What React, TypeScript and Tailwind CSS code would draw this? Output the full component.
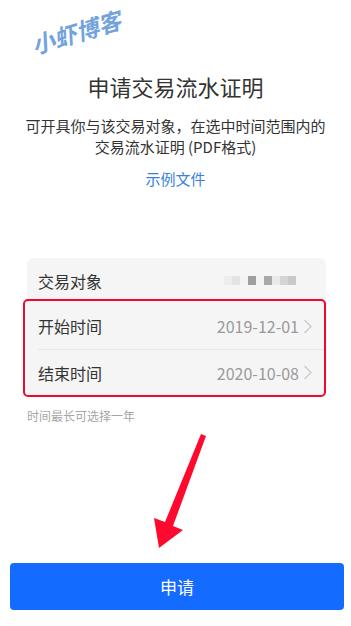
import React from "react";

const font = {
  fontFamily: '"Noto Sans CJK SC", "Noto Sans", sans-serif',
};

function Chevron() {
  return (
    <svg width="10" height="15" viewBox="0 0 10 15" className="ml-[4px]">
      <path d="M1.5 1 L8 7.5 L1.5 14" fill="none" stroke="#c8c8c8" strokeWidth="1.2" />
    </svg>
  );
}

function Blurred() {
  const cells = [
    "#ededed", "#e3e3e3", "#f3f3f3", "#9f9f9f", "#f3f3f3", "#a8a8a8", "#e9e9e9", "#d4d4d4", "#c9c9c9",
  ];
  return (
    <div className="mr-[30px] flex items-end">
      {cells.map((c, i) => (
        <div key={i} className="h-[9px] w-[8px]" style={{ background: c }} />
      ))}
    </div>
  );
}

export default function App() {
  return (
    <div className="relative h-[626px] w-[351px] overflow-hidden bg-white" style={font}>
      {/* watermark */}
      <div className="absolute left-[28px] top-[17px] w-[100px] -rotate-[17deg] whitespace-nowrap px-[2px] py-[3px] text-[23px] font-bold italic leading-none text-[#72a3de]">
        小虾博客
      </div>

      <div className="flex flex-col items-center pt-[72px]">
        <h1 className="text-[22px] leading-[28px] text-[#333]">申请交易流水证明</h1>
        <p className="mt-[15px] text-center text-[15px] leading-[21px] text-[#333]">
          可开具你与该交易对象，在选中时间范围内的
          <br />
          交易流水证明 (PDF格式)
        </p>
        <div className="mt-[11px] text-[15px] leading-[21px] text-[#3a7fe0]">示例文件</div>
      </div>

      <div className="mx-[27px] mt-[69px] w-[299px]">
        <div className="relative rounded-[6px] bg-[#f5f5f5]">
          <div className="flex h-[45px] items-center justify-between pl-[11px]">
            <span className="text-[16px] text-[#333]">交易对象</span>
            <Blurred />
          </div>
          <div className="flex h-[46px] items-center justify-between pl-[11px] pr-[13px]">
            <span className="text-[16px] text-[#333]">开始时间</span>
            <span className="flex items-center text-[16px] text-[#9a9a9a]">
              2019-12-01
              <Chevron />
            </span>
          </div>
          <div className="ml-[11px] h-px bg-[#e8e8e8]" />
          <div className="flex h-[45px] items-center justify-between pl-[11px] pr-[13px]">
            <span className="text-[16px] text-[#333]">结束时间</span>
            <span className="flex items-center text-[16px] text-[#9a9a9a]">
              2020-10-08
              <Chevron />
            </span>
          </div>
          <div className="absolute -left-[4px] right-0 top-[41px] bottom-[-2px] rounded-[5px] border-2 border-[#f2072d]" />
        </div>
        <div className="mt-[12px] text-[12px] text-[#a6a6a6]">时间最长可选择一年</div>
      </div>

      {/* annotation arrow */}
      <svg className="absolute left-0 top-[425px]" width="351" height="130" viewBox="0 425 351 130">
        <path d="M201 434 L206 436 L173 526 L183 530 L159 548 L154 518 L165 522 Z" fill="#ff0a2e" />
      </svg>

      <div className="absolute left-[10px] top-[563px] flex h-[47px] w-[334px] items-center justify-center rounded-[4px] bg-[#136bff] text-[17px] text-white">
        申请
      </div>
    </div>
  );
}
